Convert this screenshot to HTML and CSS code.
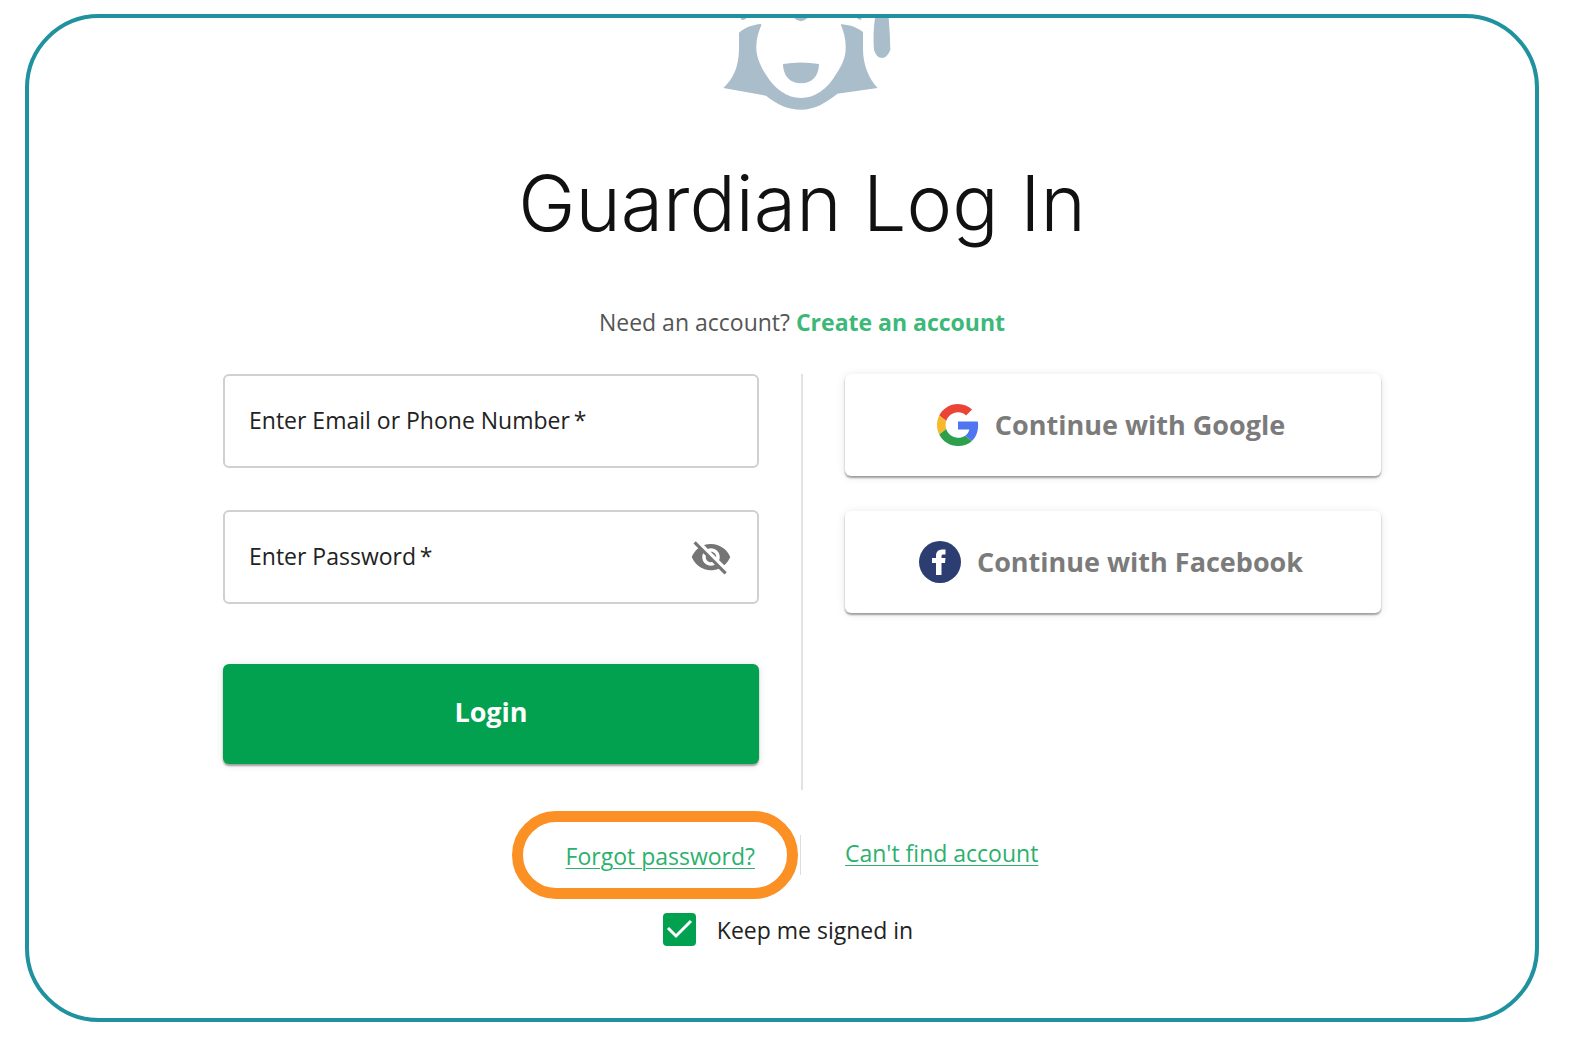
FILE: index.html
```html
<!DOCTYPE html>
<html lang="en">
<head>
  <meta charset="UTF-8">
  <meta name="viewport" content="width=device-width, initial-scale=1">
  <title>Guardian Log In</title>
  <link rel="stylesheet" href="styles.css">
</head>
<body>
  <main class="frame">
    <svg class="mascot" viewBox="36 54 540 279" aria-hidden="true">
      <path d="M183 72C158 74 135 82 117 98V150C116 195 103 234 70 264L198 287C232 314 266 329 303 329C342 329 376 310 412 281L533 264C506 235 490 196 489 150V96C470 81 447 74 422 73C432 96 438 120 437 146C437 172 425 198 408 223C381 269 344 294 303 294C262 294 225 269 197 223C181 197 169 171 169 144C168 120 175 97 184 75Z"/>
      <path d="M249 192Q303 183 357 192C357 228 335 250 303 250C271 250 249 228 249 192Z"/>
      <path d="M525 54H566Q570 100 571 150C564 166 556 174 546 174C535 174 527 165 522 150Q518 100 525 54Z"/>
      <path d="M282 54H323Q303 73 282 54ZM122 54H140Q130 63 123 58ZM470 54H484V59Q476 60 470 54Z"/>
    </svg>
    <h1>Guardian Log In</h1>
    <p class="signup">Need an account? <a href="#">Create an account</a></p>

    <div class="columns">
      <form class="login" id="login">
        <div class="field">
          <input type="text" aria-label="Enter Email or Phone Number" placeholder="Enter Email or Phone Number&#8201;*">
        </div>
        <div class="field">
          <input type="password" aria-label="Enter Password" placeholder="Enter Password&#8201;*">
          <button type="button" class="toggle" aria-label="Show password">
            <svg viewBox="0 0 24 24"><path d="M12 7c2.76 0 5 2.24 5 5 0 .65-.13 1.26-.36 1.83l2.92 2.92c1.51-1.26 2.7-2.89 3.43-4.75-1.73-4.39-6-7.5-11-7.5-1.4 0-2.74.25-3.98.7l2.16 2.16C10.74 7.13 11.35 7 12 7zM2 4.27l2.28 2.28.46.46C3.08 8.3 1.78 10.02 1 12c1.73 4.39 6 7.5 11 7.5 1.55 0 3.03-.3 4.38-.84l.42.42L19.73 22 21 20.73 3.27 3 2 4.27zM7.53 9.8l1.55 1.55c-.05.21-.08.43-.08.65 0 1.66 1.34 3 3 3 .22 0 .44-.03.65-.08l1.55 1.55c-.67.33-1.41.53-2.2.53-2.76 0-5-2.24-5-5 0-.79.2-1.53.53-2.2zm4.31-.78l3.15 3.15.02-.16c0-1.66-1.34-3-3-3l-.17.01z"/></svg>
          </button>
        </div>
        <button type="submit" class="btn btn-login">Login</button>
      </form>
      <div class="social">
        <button type="button" class="btn">
          <svg class="icon" viewBox="0 0 48 48" aria-hidden="true">
            <path fill="#e94435" d="M24 9.5c3.54 0 6.71 1.22 9.21 3.6l6.85-6.85C35.9 2.38 30.47 0 24 0 14.62 0 6.51 5.38 2.56 13.22l7.98 6.19C12.43 13.72 17.74 9.5 24 9.5z"/>
            <path fill="#4f75f0" d="M46.98 24.55c0-1.57-.15-3.09-.38-4.55H24v9.02h12.94c-.58 2.96-2.26 5.48-4.78 7.18l7.73 6c4.51-4.18 7.09-10.36 7.09-17.65z"/>
            <path fill="#f6b92b" d="M10.53 28.59c-.48-1.45-.76-2.99-.76-4.59s.27-3.14.76-4.59l-7.98-6.19C.92 16.46 0 20.12 0 24c0 3.88.92 7.54 2.56 10.78l7.97-6.19z"/>
            <path fill="#2d9f4d" d="M24 48c6.48 0 11.93-2.13 15.89-5.81l-7.73-6c-2.15 1.45-4.92 2.3-8.16 2.3-6.26 0-11.57-4.22-13.47-9.91l-7.98 6.19C6.51 42.62 14.62 48 24 48z"/>
          </svg>
          Continue with Google
        </button>
        <button type="button" class="btn">
          <svg class="icon" viewBox="0 0 42 42" aria-hidden="true">
            <circle cx="21" cy="21" r="21" fill="#2c3d72"/>
            <path fill="#fff" d="M17 34V22H13V17H17V15C17 10.500 19.500 8.500 24 8.500H26.500V13.500H24.500C23 13.500 22.500 14 22.500 15.500V17H26.500L26 22H22.500V34Z"/>
          </svg>
          Continue with Facebook
        </button>
      </div>
    </div>

    <div class="links">
      <div class="forgot"><a href="#">Forgot password?</a></div>
      <div class="find"><a href="#">Can't find account</a></div>
    </div>
    <label class="remember"><input type="checkbox" form="login" checked>Keep me signed in</label>
  </main>
</body>
</html>
```
FILE: styles.css
```css
* { margin: 0; padding: 0; box-sizing: border-box; }
body {
  font-family: 'Open Sans', sans-serif;
  font-size: 23px;
  line-height: 32px;
  color: #222;
  background: #fff;
}
.frame {
  display: flex;
  flex-direction: column;
  margin: 14px 35px 19px 25px;
  padding: 0 154px 72px 194px;
  border: 4px solid #1f919f;
  border-radius: 74px;
}
.mascot {
  align-self: center;
  width: 180px;
  height: 93px;
  fill: #a9bdca;
}
h1 {
  margin-top: 44px;
  font-family: Inter, sans-serif;
  font-size: 77px;
  font-weight: 300;
  line-height: 96px;
  text-align: center;
  color: #111;
}
.signup {
  margin-top: 55px;
  text-align: center;
  color: #555;
}
.signup a {
  font-weight: 700;
  color: #3cb878;
  text-decoration: none;
}

/* Login form and social buttons */
.columns {
  display: grid;
  grid-template-columns: 1fr 2px 1fr;
  column-gap: 42px;
  margin-top: 36px;
}
.columns::before {
  content: "";
  grid-column: 2;
  grid-row: 1;
  background: #e2e2e2;
}
.login {
  grid-column: 1;
  grid-row: 1;
  padding-bottom: 26px;
}
.social {
  grid-column: 3;
  grid-row: 1;
  display: flex;
  flex-direction: column;
  gap: 35px;
}
.field {
  display: flex;
  align-items: center;
  height: 94px;
  margin-bottom: 42px;
  padding: 0 25px 0 24px;
  border: 2px solid #d0d0d0;
  border-radius: 6px;
}
.field input {
  flex: 1;
  min-width: 0;
  height: 100%;
  padding-bottom: 3px;
  font: inherit;
  border: 0;
  outline: 0;
  background: none;
}
.field input::placeholder {
  color: #222;
  opacity: 1;
}
.toggle {
  border: 0;
  background: none;
}
.toggle svg {
  display: block;
  width: 42px;
  height: 42px;
  fill: #757575;
}
.btn {
  display: flex;
  align-items: center;
  justify-content: center;
  gap: 16px;
  width: 100%;
  height: 102px;
  padding-right: 4px;
  font: 700 27px/36px 'Open Sans', sans-serif;
  color: #7b7b7b;
  background: #fff;
  border: 0;
  border-radius: 6px;
  box-shadow: 0 2px 2px rgba(0, 0, 0, 0.35), 0 1px 10px rgba(0, 0, 0, 0.1);
}
.btn-login {
  height: 100px;
  margin-top: 60px;
  padding: 0 0 4px;
  color: #fff;
  background: #02a14f;
}
.icon {
  width: 42px;
  height: 42px;
}

/* Links under the form */
.links {
  display: grid;
  grid-template-columns: 1fr 1fr;
  margin-top: 21px;
}
.links a {
  color: #2bb16d;
  text-decoration-thickness: 1px;
  text-underline-offset: 3px;
}
.forgot {
  justify-self: end;
  margin-right: 4px;
  padding: 18px 32px 16px 43px;
  border: 11px solid #fb9124;
  border-radius: 44px;
}
.find {
  display: flex;
  align-items: center;
  align-self: center;
  height: 40px;
  margin-left: -2px;
  padding: 0 0 4px 44px;
  border-left: 1px solid #ddd;
}
.remember {
  display: flex;
  align-items: center;
  align-self: center;
  gap: 21px;
  margin-top: 14px;
  padding-right: 28px;
}
.remember input {
  appearance: none;
  width: 33px;
  height: 33px;
  border-radius: 4px;
  background: #02a14f url("data:image/svg+xml,%3Csvg xmlns='http://www.w3.org/2000/svg' viewBox='0 0 33 33'%3E%3Cpath d='M5 15l8 8L28 8' fill='none' stroke='white' stroke-width='3'/%3E%3C/svg%3E");
}
```
